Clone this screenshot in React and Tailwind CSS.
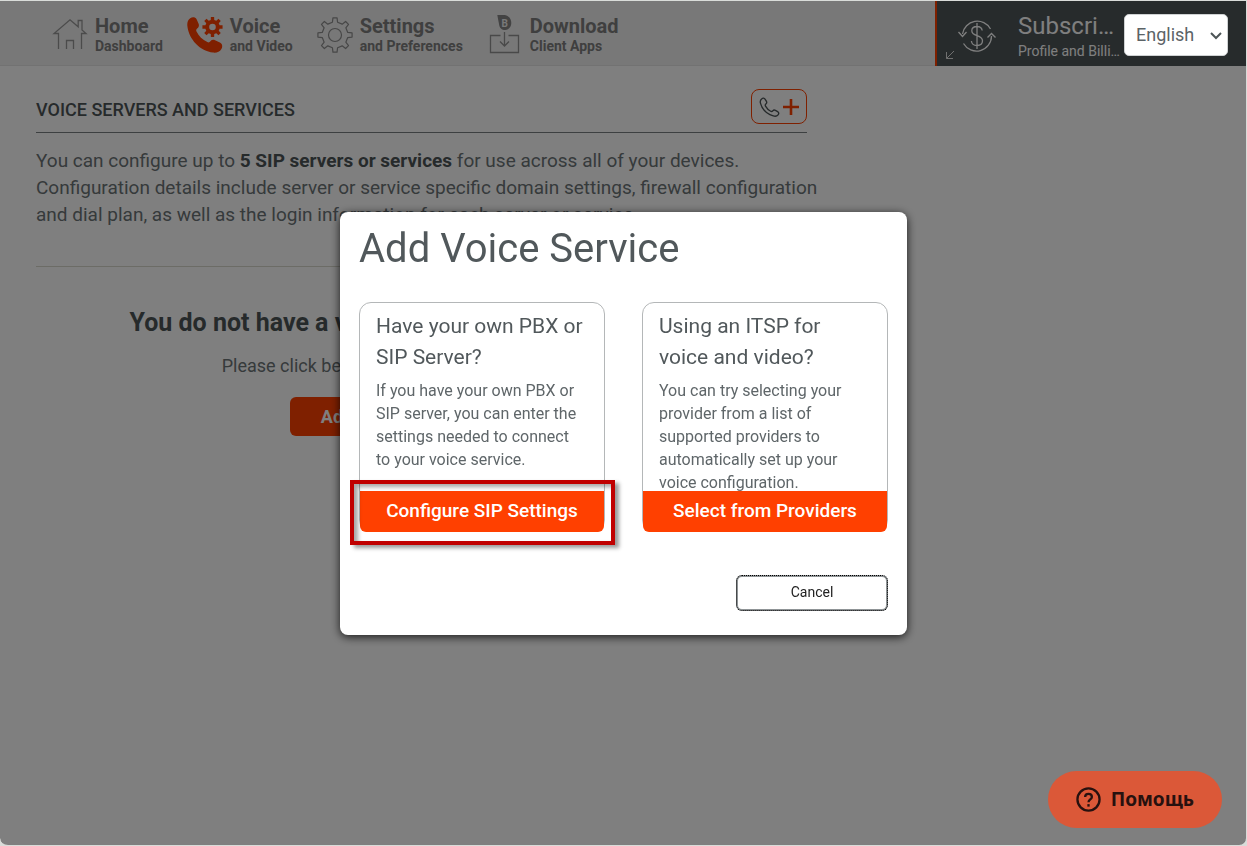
import React from "react";

const navItems = [
  { title: "Home", sub: "Dashboard", Icon: HomeIcon },
  { title: "Voice", sub: "and Video", Icon: VoiceIcon },
  { title: "Settings", sub: "and Preferences", Icon: GearIcon },
  { title: "Download", sub: "Client Apps", Icon: DownloadIcon },
];

function gearPath(cx, cy, teeth, outer, inner, topHalf, rootHalf) {
  const pts = [];
  for (let i = 0; i < teeth; i++) {
    const a = (i * 2 * Math.PI) / teeth - Math.PI / 2;
    const at = (r, d) =>
      `${(cx + r * Math.cos(a + d)).toFixed(2)} ${(cy + r * Math.sin(a + d)).toFixed(2)}`;
    pts.push(at(inner, -rootHalf), at(outer, -topHalf), at(outer, topHalf), at(inner, rootHalf));
  }
  return `M${pts.join("L")}Z`;
}

function HomeIcon() {
  return (
    <svg viewBox="0 0 36 36" className="size-9" fill="none" stroke="#979797" strokeWidth="1.3" aria-hidden="true">
      <path d="M6.5 32V16.5H2L18 2.800l8.200 7V3.500h3.800v9.500l4 3.500h-4.500V32" />
      <path d="M14.500 32v-8.500h7V32" />
    </svg>
  );
}

function VoiceIcon() {
  return (
    <svg viewBox="0 0 36 36" className="size-9" aria-hidden="true">
      <path
        fill="#ff4000"
        d="M3.200 1.200C5.500-.3 8.300.1 9.600 2.200l2 4.600c.7 1.900.2 3.300-1.200 4.500-1.300 1-1.500 1.900-.9 3.300 2.300 4.700 6 8.200 10.800 10.500 1.400.6 2.200.4 3.100-.8 1.300-1.500 2.800-1.800 4.600-1l4.900 2.300c2.500 1.200 2.900 3.900 1.500 6.400-1.700 3-4.600 3.900-8.300 3.600C13.500 34.500 1.500 22.500.3 8.600.1 5.300.9 2.700 3.200 1.200z"
      />
      <path
        fill="#ff4000"
        fillRule="evenodd"
        d={gearPath(25.5, 10, 8, 10.2, 7.3, 0.16, 0.24) + "M25.500 6.700a3.300 3.300 0 1 0 0 6.600a3.300 3.300 0 1 0 0-6.600Z"}
      />
    </svg>
  );
}

function GearIcon() {
  return (
    <svg viewBox="0 0 36 36" className="size-9" fill="none" stroke="#8e8e8e" strokeWidth="1.2" strokeLinejoin="round" aria-hidden="true">
      <path d={gearPath(18, 18, 8, 17.2, 13, 0.12, 0.2)} />
      <circle cx="18" cy="18" r="6.500" />
    </svg>
  );
}

function DownloadIcon() {
  return (
    <svg viewBox="0 0 36 40" className="h-10 w-9" aria-hidden="true">
      <path fill="#868686" d="M10.300 0h7.500c4.500 1 6.500 4.500 6.500 8 0 3.700-2.700 7-6 7-3.600 0-5.800-2-6.300-6z" />
      <text x="14.500" y="11.500" fontSize="10" fontWeight="700" fill="#f0f0f0" fontFamily="Roboto, sans-serif">B</text>
      <path
        fill="none"
        stroke="#929292"
        strokeWidth="1.300"
        d="M13.500 20.500h-10v17h28v-17h-10M17.500 17v14M13 26.500l4.500 4.500 4.500-4.500"
      />
    </svg>
  );
}

function BillingIcon() {
  return (
    <svg viewBox="0 0 40 36" className="h-9 w-10" fill="none" stroke="#ffffff" strokeWidth="1.300" aria-hidden="true">
      <path d="M5.500 15a15 15 0 0 1 28-5M34.500 17a15 15 0 0 1-28 7.500M1.500 13l4 4.500 4-4.500M30.500 18.500l4-4 4 4" />
      <path d="M20 4v26M25.200 11.500c-.4-2.600-2.300-4-5.200-4s-5.200 1.500-5.200 4.300c0 6.400 10.700 3.200 10.700 10 0 3-2.300 4.700-5.500 4.700-3.300 0-5.300-1.700-5.600-4.500" />
    </svg>
  );
}

function HandsetIcon() {
  return (
    <svg viewBox="0 0 22 22" className="size-[21px]" fill="none" stroke="#4d5557" strokeWidth="1.400" aria-hidden="true">
      <path d="M3 2.800c1-.9 2.600-.7 3.300.4l1.500 2.500c.6 1.100.3 1.900-.6 2.700-.8.700-.9 1.300-.4 2.200 1.300 2.300 3.100 4.100 5.400 5.400.9.500 1.600.4 2.200-.4.800-1 1.700-1.200 2.800-.6l2.300 1.300c1.500.9 1.500 2.300.5 3.500-1.200 1.400-3 1.700-5 1.100C8 18.700 3.300 14 1.500 7.400c-.5-1.900 0-3.500 1.500-4.600z" />
    </svg>
  );
}

function Header() {
  return (
    <header className="flex h-[65px] border-b border-[#e4e4e4] bg-[#f0f0f0]">
      <nav className="flex flex-1 items-center gap-6 pt-[3px] pl-[52px]">
        {navItems.map(({ title, sub, Icon }) => (
          <a key={title} href="#" className="flex items-center gap-[7px] font-bold text-[#7e7e7e]">
            <Icon />
            <span className="flex flex-col">
              <span className="text-[20px] leading-[22px]">{title}</span>
              <span className="text-[14px] leading-[18px]">{sub}</span>
            </span>
          </a>
        ))}
      </nav>
      <div className="-mb-px flex w-[311px] items-center border-l-2 border-[#ff4000] bg-[#4e5658] pt-[3px] pr-[18px] text-white">
        <svg viewBox="0 0 10 10" className="mb-[6px] ml-2 size-[10px] self-end" fill="none" stroke="#e0e0e0" aria-hidden="true">
          <path d="M9 1L1.500 8.500M1.500 2v6.500H8" />
        </svg>
        <a href="#" className="ml-[2px] flex items-center pt-[3px]">
          <BillingIcon />
          <span className="ml-[21px] w-[104px]">
            <span className="block truncate text-[24px] leading-[29px]">Subscription</span>
            <span className="block truncate text-[14px] leading-[20px]">Profile and Billing</span>
          </span>
        </a>
        <label className="relative z-30 ml-auto block w-[104px] shrink-0">
          <span className="sr-only">Language</span>
          <select className="h-[42px] w-full appearance-none rounded-[5px] border border-[#cfd2d3] bg-white pb-[2px] pl-[11px] text-[18px] text-[#5b6366]">
            <option>English</option>
          </select>
          <svg viewBox="0 0 12 8" className="pointer-events-none absolute top-[18px] right-[6px] h-2 w-3" fill="none" stroke="#4d5557" strokeWidth="2" aria-hidden="true">
            <path d="M1 1l5 5 5-5" />
          </svg>
        </label>
      </div>
    </header>
  );
}

function Content() {
  return (
    <main className="mx-[36px] max-w-[771px] pt-[23px] text-[#6c7477]">
      <div className="flex items-center justify-between border-b border-[#7a8082] pb-2">
        <h1 className="pt-[5px] text-[18px] font-medium text-[#4d5557]">VOICE SERVERS AND SERVICES</h1>
        <button aria-label="Add voice service" className="flex h-[35px] w-14 items-center justify-center gap-[3px] rounded-lg border border-[#ff4000]">
          <HandsetIcon />
          <svg viewBox="0 0 16 16" className="size-4" stroke="#ff4000" strokeWidth="2.600" aria-hidden="true">
            <path d="M8 0v16M0 8h16" />
          </svg>
        </button>
      </div>
      <div className="border-b border-[#d8d8cc] pt-[14px] pb-[38px]">
        <p className="-mr-4 text-[19px] leading-[27px]">
          You can configure up to <strong className="font-bold text-[#4d5557]">5 SIP servers or services</strong> for use across all of
          your devices. Configuration details include server or service specific domain settings, firewall configuration and dial plan, as
          well as the login information for each server or service.
        </p>
      </div>
      <section className="flex flex-col items-center pt-[38px]">
        <h2 className="text-[25px] leading-9 font-bold text-[#4d5557]">You do not have a voice or video service configured.</h2>
        <p className="pt-[11px] text-[18px] leading-[27px]">Please click below to configure your voice service.</p>
        <button className="mt-[18px] h-[39px] w-[263px] rounded-md bg-[#ff4000] text-[18px] font-bold text-white">Add a New Voice Service</button>
      </section>
    </main>
  );
}

function ServiceCard({ title, text, action, highlighted }) {
  return (
    <section className="relative flex h-[230px] w-[246px] flex-col rounded-xl border border-[#b4b7b8]">
      <h3 className="px-4 pt-2 text-[21px] leading-[31px] text-[#51585b]">{title}</h3>
      <p className="pt-[6px] pr-5 pl-4 text-[16px] leading-[23px] text-[#5f6669]">{text}</p>
      <button className="absolute inset-x-0 -bottom-px h-[41px] rounded-b-md bg-[#ff4000] text-[19px] font-medium text-white">{action}</button>
      {highlighted && (
        <span className="pointer-events-none absolute -right-[11px] -bottom-[14px] -left-[10px] h-[65px] border-4 border-[#c00000] shadow-[4px_3px_4px_rgba(0,0,0,0.4),inset_4px_3px_4px_rgba(0,0,0,0.35)]" />
      )}
    </section>
  );
}

function AddServiceDialog() {
  return (
    <div className="fixed inset-0 z-20 flex items-center justify-center rounded-b-lg border-y border-r border-transparent bg-black/50 bg-clip-padding pl-px">
      <div role="dialog" aria-modal="true" aria-labelledby="dialog-title" className="w-[567px] rounded-lg bg-white px-[19px] pt-[13px] pb-6 shadow-[0_2px_10px_rgba(0,0,0,0.8)]">
        <h2 id="dialog-title" className="text-[40px] leading-[48px] text-[#51585b]">Add Voice Service</h2>
        <div className="flex justify-between pt-[29px]">
          <ServiceCard
            title="Have your own PBX or SIP Server?"
            text="If you have your own PBX or SIP server, you can enter the settings needed to connect to your voice service."
            action="Configure SIP Settings"
            highlighted
          />
          <ServiceCard
            title="Using an ITSP for voice and video?"
            text="You can try selecting your provider from a list of supported providers to automatically set up your voice configuration."
            action="Select from Providers"
          />
        </div>
        <div className="flex justify-end pt-[43px]">
          <button className="h-9 w-[152px] rounded-md border-2 border-[#8f9496] text-[14px] text-[#222222] outline-1 -outline-offset-1 outline-black outline-dotted">Cancel</button>
        </div>
      </div>
    </div>
  );
}

export default function App() {
  return (
    <div className="flex min-h-screen flex-col bg-[#d9dcd9] pt-px pr-px pb-px font-[Roboto,sans-serif]">
      <div className="flex-1 rounded-b-lg bg-white">
        <Header />
        <Content />
      </div>
      <AddServiceDialog />
      <button className="fixed right-[25px] bottom-[18px] z-30 flex h-[57px] items-center gap-[10px] rounded-full bg-[#db5838] px-[28px] font-['Noto_Sans',sans-serif] text-[19px] font-bold text-[#27110f]">
        <svg viewBox="0 0 26 26" className="size-[25px]" fill="none" stroke="currentColor" strokeWidth="2.400" aria-hidden="true">
          <circle cx="13" cy="13" r="11.500" />
          <path d="M9.500 10.500c0-2 1.500-3.300 3.500-3.300s3.500 1.200 3.500 3.100c0 2.500-3.500 2.700-3.500 5.500" />
          <path d="M13 17.800v2.600" />
        </svg>
        Помощь
      </button>
    </div>
  );
}
